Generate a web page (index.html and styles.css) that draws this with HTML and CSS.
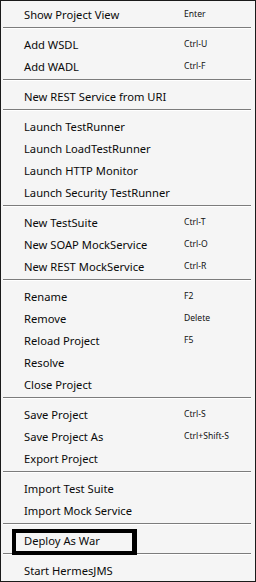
FILE: index.html
```html
<!DOCTYPE html>
<html lang="en">
<head>
    <meta charset="UTF-8">
    <meta name="viewport" content="width=device-width, initial-scale=1.0">
    <title>Project Menu</title>
    <link rel="stylesheet" href="styles.css">
</head>
<body>
    <div class="context-menu">
        <div class="menu-item"><span class="label">Show Project View</span><span class="shortcut">Enter</span></div>
        <div class="separator"></div>
        <div class="menu-item"><span class="label">Add WSDL</span><span class="shortcut">Ctrl-U</span></div>
        <div class="menu-item"><span class="label">Add WADL</span><span class="shortcut">Ctrl-F</span></div>
        <div class="separator"></div>
        <div class="menu-item"><span class="label">New REST Service from URI</span></div>
        <div class="separator"></div>
        <div class="menu-item"><span class="label">Launch TestRunner</span></div>
        <div class="menu-item"><span class="label">Launch LoadTestRunner</span></div>
        <div class="menu-item"><span class="label">Launch HTTP Monitor</span></div>
        <div class="menu-item"><span class="label">Launch Security TestRunner</span></div>
        <div class="separator"></div>
        <div class="menu-item"><span class="label">New TestSuite</span><span class="shortcut">Ctrl-T</span></div>
        <div class="menu-item"><span class="label">New SOAP MockService</span><span class="shortcut">Ctrl-O</span></div>
        <div class="menu-item"><span class="label">New REST MockService</span><span class="shortcut">Ctrl-R</span></div>
        <div class="separator"></div>
        <div class="menu-item"><span class="label">Rename</span><span class="shortcut">F2</span></div>
        <div class="menu-item"><span class="label">Remove</span><span class="shortcut">Delete</span></div>
        <div class="menu-item"><span class="label">Reload Project</span><span class="shortcut">F5</span></div>
        <div class="menu-item"><span class="label">Resolve</span></div>
        <div class="menu-item"><span class="label">Close Project</span></div>
        <div class="separator"></div>
        <div class="menu-item"><span class="label">Save Project</span><span class="shortcut">Ctrl-S</span></div>
        <div class="menu-item"><span class="label">Save Project As</span><span class="shortcut">Ctrl+Shift-S</span></div>
        <div class="menu-item"><span class="label">Export Project</span></div>
        <div class="separator"></div>
        <div class="menu-item"><span class="label">Import Test Suite</span></div>
        <div class="menu-item"><span class="label">Import Mock Service</span></div>
        <div class="separator"></div>
        <div class="menu-item highlighted"><span class="label">Deploy As War</span><span class="highlight-box"></span></div>
        <div class="separator"></div>
        <div class="menu-item"><span class="label">Start HermesJMS</span></div>
    </div>
</body>
</html>
```

FILE: styles.css
```css
* {
    margin: 0;
    padding: 0;
    box-sizing: border-box;
}

body {
    font-family: "Noto Sans", "Open Sans", sans-serif;
    background: #ffffff;
}

.context-menu {
    width: 256px;
    height: 582px;
    background: #f5f5f5;
    border: 1px solid #1a1a1a;
    padding-top: 2px;
    display: flex;
    flex-direction: column;
}

.menu-item {
    position: relative;
    height: 22px;
    display: flex;
    align-items: center;
    padding-left: 23px;
    color: #0a0a0a;
}

.label {
    width: 160px;
    font-size: 11.2px;
    white-space: nowrap;
}

.shortcut {
    font-size: 8.6px;
    color: #111;
}

.separator {
    height: 8px;
    padding-top: 2px;
    margin: 0 4px 0 2px;
}

.separator::before {
    content: "";
    display: block;
    height: 1px;
    background: #7c7c7c;
    border-bottom: 1px solid #ffffff;
    box-sizing: content-box;
}

/* annotation frame drawn over the item */
.highlight-box {
    position: absolute;
    left: 11px;
    top: 0;
    width: 125px;
    height: 26px;
    border: 4px solid #000;
    border-right-width: 5px;
}
```
